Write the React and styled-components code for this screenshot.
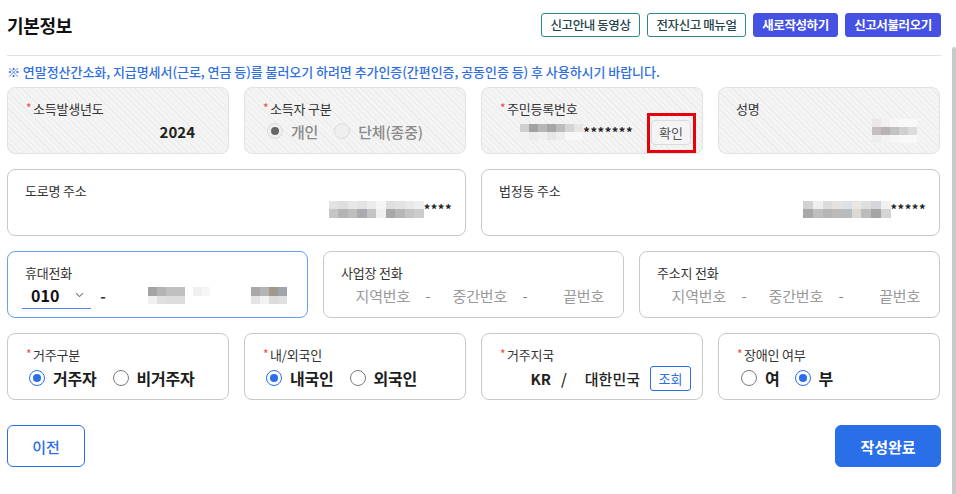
import React from "react";
import styled, { createGlobalStyle, css } from "styled-components";

const GlobalStyle = createGlobalStyle`
  html, body { margin: 0; padding: 0; background: #fff; }
  body { font-family: "Noto Sans CJK KR", "Noto Sans", sans-serif; color: #222; }
  * { box-sizing: border-box; }
`;

const Page = styled.div`
  position: relative;
  width: 956px;
  height: 494px;
  padding: 13px 0 0 7px;
  overflow: hidden;
`;

const ScrollThumb = styled.div`
  position: absolute;
  right: 0;
  top: 47px;
  bottom: 0;
  width: 4px;
  background: #c9c9c9;
  border-radius: 2px 2px 0 0;
`;

const Header = styled.div`
  display: flex;
  align-items: center;
  justify-content: space-between;
  width: 934px;
  height: 24px;
`;

const Title = styled.h1`
  margin: 0;
  font-size: 18px;
  line-height: 24px;
  font-weight: 700;
  color: #111;
  letter-spacing: -0.3px;
`;

const HeaderButtons = styled.div`
  display: flex;
  gap: 7px;
`;

const TopButton = styled.button`
  width: ${(p) => p.$w}px;
  height: 24px;
  padding: 0;
  border-radius: 3px;
  font-family: inherit;
  font-size: 12.5px;
  line-height: 20px;
  letter-spacing: -0.4px;
  ${(p) =>
    p.$filled
      ? css`
          background: #4451e3;
          border: 1px solid #4451e3;
          color: #fff;
          font-weight: 700;
        `
      : css`
          background: #fff;
          border: 1.5px solid #2b8a8f;
          color: #23444a;
          font-weight: 500;
        `}
`;

const Divider = styled.div`
  width: 934px;
  height: 1px;
  background: #e3e3e3;
  margin-top: 18px;
`;

const Notice = styled.p`
  margin: 7px 0 6px;
  font-size: 13px;
  line-height: 18px;
  font-weight: 500;
  color: #2f6fe3;
  letter-spacing: -0.05px;
`;

const Rows = styled.div`
  display: flex;
  flex-direction: column;
  gap: 15px;
  width: 933px;
`;

const Row = styled.div`
  display: grid;
  grid-template-columns: repeat(${(p) => p.$cols}, 1fr);
  gap: 15px;
`;

const Card = styled.div`
  position: relative;
  height: 67px;
  padding: 10px 11px 0 17px;
  border-radius: 8px;
  display: flex;
  flex-direction: column;
  ${(p) =>
    p.$disabled
      ? css`
          border: 1px solid #e2e2e2;
          background: repeating-linear-gradient(
            45deg,
            #f4f4f4 0px,
            #f4f4f4 3px,
            #ececec 3px,
            #ececec 4px
          );
        `
      : p.$focused
      ? css`
          border: 1px solid #6b9ef3;
          background: #fff;
        `
      : css`
          border: 1px solid #c8c8c8;
          background: #fff;
        `}
`;

const Label = styled.div`
  display: flex;
  align-items: center;
  height: 20px;
  padding-left: ${(p) => (p.$req ? "1px" : "0")};
  font-size: 13px;
  color: #333;
  letter-spacing: -0.2px;
`;

const Req = styled.span`
  color: #ef4b43;
  font-size: 12px;
  width: 7px;
  margin-top: -2px;
`;

const ValueRow = styled.div`
  display: flex;
  align-items: center;
  height: ${(p) => p.$h || 26}px;
  justify-content: ${(p) => (p.$end ? "flex-end" : "flex-start")};
  padding-right: ${(p) => p.$pr || 0}px;
  padding-left: ${(p) => p.$pl || 0}px;
`;

const Year = styled.span`
  font-size: 15px;
  font-weight: 700;
  color: #222;
`;

const RadioItem = styled.label`
  display: flex;
  align-items: center;
  gap: 8px;
  margin-right: ${(p) => p.$mr || 16}px;
  font-size: ${(p) => (p.$disabled ? 15 : 16)}px;
  font-weight: ${(p) => (p.$disabled ? 500 : 700)};
  color: ${(p) => (p.$disabled ? "#8a8a8a" : "#1d1d1d")};
  letter-spacing: -0.2px;
`;

const RadioCircle = styled.span`
  width: 16px;
  height: 16px;
  border-radius: 50%;
  display: flex;
  align-items: center;
  justify-content: center;
  flex-shrink: 0;
  ${(p) =>
    p.$disabled
      ? css`
          border: 1px solid #dcdcdc;
          background: #efefef;
        `
      : p.$checked
      ? css`
          border: 1.5px solid #2a6ee8;
          background: #fff;
        `
      : css`
          border: 1.5px solid #7a7a7a;
          background: #fff;
        `}
  &::after {
    content: "";
    display: ${(p) => (p.$checked ? "block" : "none")};
    width: 8px;
    height: 8px;
    border-radius: 50%;
    background: ${(p) => (p.$disabled ? "#666" : "#2a6ee8")};
  }
`;

const Radio = ({ checked, disabled, children, mr }) => (
  <RadioItem $disabled={disabled} $mr={mr}>
    <RadioCircle $checked={checked} $disabled={disabled} />
    {children}
  </RadioItem>
);

const MosaicGrid = styled.div`
  display: grid;
  grid-template-columns: repeat(${(p) => p.$cols}, ${(p) => p.$cw}px);
  grid-auto-rows: ${(p) => p.$ch}px;
  flex-shrink: 0;
  margin: ${(p) => p.$m || 0};
`;

const Cell = styled.span`
  display: block;
`;

const Mosaic = ({ rows, cw = 9, ch = 8, m }) => (
  <MosaicGrid $cols={rows[0].length} $cw={cw} $ch={ch} $m={m}>
    {rows.flat().map((c, i) => (
      <Cell key={i} style={{ background: c }} />
    ))}
  </MosaicGrid>
);

const Stars = styled.span`
  font-size: 13px;
  font-weight: 700;
  color: #222;
  letter-spacing: 0.5px;
  line-height: 14px;
`;

const CheckWrap = styled.div`
  position: relative;
  margin-left: 18px;
`;

const GrayButton = styled.button`
  width: 40px;
  height: 25px;
  border: 1px solid #dcdcdc;
  border-radius: 4px;
  background: #f4f4f4;
  font-family: inherit;
  font-size: 13px;
  color: #555;
  padding: 0;
`;

const Highlight = styled.div`
  position: absolute;
  left: -4px;
  top: -6px;
  width: 49px;
  height: 40px;
  border: 3px solid #e8000b;
  pointer-events: none;
`;

const Select = styled.div`
  display: flex;
  align-items: center;
  justify-content: space-between;
  width: 69px;
  height: 26px;
  margin-left: -3px;
  padding: 0 7px 0 9px;
  border-bottom: 1px solid #4f86ee;
  font-size: 16px;
  font-weight: 700;
  color: #111;
`;

const Dash = styled.span`
  width: ${(p) => p.$w || 20}px;
  text-align: center;
  font-size: 15px;
  color: ${(p) => (p.$light ? "#888" : "#333")};
  font-weight: ${(p) => (p.$light ? 400 : 700)};
  flex-shrink: 0;
`;

const Field = styled.div`
  flex: 1;
  display: flex;
  justify-content: flex-end;
  align-items: center;
  padding-right: ${(p) => p.$pr ?? 8}px;
  font-size: 15px;
  color: #9a9a9a;
  letter-spacing: -0.2px;
`;

const Country = styled.span`
  font-size: 15px;
  font-weight: ${(p) => (p.$bold ? 700 : 500)};
  color: #222;
  margin: ${(p) => p.$m || 0};
`;

const OutlineSmall = styled.button`
  width: 41px;
  height: 25px;
  border: 1px solid #2a6ee8;
  border-radius: 3px;
  background: #fff;
  color: #2a6ee8;
  font-family: inherit;
  font-size: 13px;
  padding: 0;
  margin-left: 10px;
`;

const Footer = styled.div`
  display: flex;
  justify-content: space-between;
  width: 934px;
  margin-top: 25px;
`;

const FooterButton = styled.button`
  height: 42px;
  border-radius: 6px;
  font-family: inherit;
  font-size: 15px;
  padding: 0;
  width: ${(p) => p.$w}px;
  ${(p) =>
    p.$primary
      ? css`
          background: #2a6ee8;
          border: 1px solid #2a6ee8;
          color: #fff;
          font-weight: 700;
        `
      : css`
          background: #fff;
          border: 1px solid #2a6ee8;
          color: #2a6ee8;
          font-weight: 500;
        `}
`;

const Chevron = () => (
  <svg width="9" height="6" viewBox="0 0 9 6" fill="none">
    <path d="M1 1.2L4.5 4.6L8 1.2" stroke="#777" strokeWidth="1.1" />
  </svg>
);

const L = ({ req, children }) => (
  <Label $req={req}>
    {req && <Req>*</Req>}
    {children}
  </Label>
);

const juminMosaic = [
  ["#cfcfcf", "#a2a2a2", "#b6b6b6", "#a6a6a6", "#bcbcbc", "#d4d4d4", "#e6e6e6"],
  ["#f2f2f2", "#ececec", "#efefef", "#e6e6e6", "#eeeeee", "#f8f8f8", "#f8f8f8"],
];
const nameMosaic = [
  ["#ece8e8", "#f2f0f0", "#f6f6f6", "#f8f8f8", "#f8f8f8"],
  ["#c4bfbf", "#b8b3b3", "#c2c2c2", "#cfcfcf", "#dcdcdc"],
  ["#ededed", "#f2f2f2", "#f6f6f6", "#f8f8f8", "#f8f8f8"],
];
const roadMosaic = [
  ["#e3e3e3", "#dedede", "#e7e7e7", "#e3e3e3", "#ebebeb", "#f5f5f5", "#dedede", "#e3e3e3", "#e8e8e8", "#eeeeee"],
  ["#c8c6c4", "#b4b4b4", "#c0bebc", "#a9abb1", "#c4c4c4", "#f0f0f0", "#a9a9a9", "#b8b6b4", "#c4c4c4", "#cccccc"],
];
const legalMosaic = [
  ["#d2d2d2", "#eeeeee", "#dcdcdc", "#e6e2e0", "#dde0e4", "#eae6e4", "#dde0dc", "#d6d6da", "#f0f0f0"],
  ["#a8a8a8", "#bebebe", "#b8b6b4", "#bcbab8", "#b8bcc0", "#dcd8d4", "#bcbcbc", "#a4a4a4", "#d4d4d4"],
];
const phoneA = [
  ["#a4a4a4", "#b4b4b4", "#c0c0c0", "#c0c0c0"],
  ["#f0f0f0", "#e0e0e0", "#dcdcdc", "#dcdcdc"],
];
const phoneB = [["#f0f0f0", "#f6f6f8"], ["#ffffff", "#ffffff"]];
const phoneC = [
  ["#a8a8a8", "#b4b4b4", "#a09888", "#a0a4ac"],
  ["#e4e4e4", "#f2f2f2", "#dcdcdc", "#e0e0e0"],
];

export default function App() {
  return (
    <>
      <GlobalStyle />
      <Page>
        <ScrollThumb />
        <Header>
          <Title>기본정보</Title>
          <HeaderButtons>
            <TopButton $w={99}>신고안내 동영상</TopButton>
            <TopButton $w={99}>전자신고 매뉴얼</TopButton>
            <TopButton $w={85} $filled>새로작성하기</TopButton>
            <TopButton $w={96} $filled>신고서불러오기</TopButton>
          </HeaderButtons>
        </Header>
        <Divider />
        <Notice>
          ※ 연말정산간소화, 지급명세서(근로, 연금 등)를 불러오기 하려면 추가인증(간편인증, 공동인증 등) 후 사용하시기 바랍니다.
        </Notice>
        <Rows>
          <Row $cols={4}>
            <Card $disabled>
              <L req>소득발생년도</L>
              <ValueRow $end $pr={22}>
                <Year>2024</Year>
              </ValueRow>
            </Card>
            <Card $disabled>
              <L req>소득자 구분</L>
              <ValueRow $pl={5}>
                <Radio checked disabled mr={16}>개인</Radio>
                <Radio disabled>단체(종중)</Radio>
              </ValueRow>
            </Card>
            <Card $disabled>
              <L req>주민등록번호</L>
              <ValueRow $end $h={27}>
                <Mosaic rows={juminMosaic} cw={9} ch={8} />
                <Stars>*******</Stars>
                <CheckWrap>
                  <GrayButton>확인</GrayButton>
                  <Highlight />
                </CheckWrap>
              </ValueRow>
            </Card>
            <Card $disabled>
              <L>성명</L>
              <ValueRow $end $pr={11} $h={26}>
                <Mosaic rows={nameMosaic} cw={9} ch={8} />
              </ValueRow>
            </Card>
          </Row>
          <Row $cols={2}>
            <Card>
              <L>도로명 주소</L>
              <ValueRow $end $pr={2} $h={18}>
                <Mosaic rows={roadMosaic} cw={9.5} ch={8.5} />
                <Stars>****</Stars>
              </ValueRow>
            </Card>
            <Card>
              <L>법정동 주소</L>
              <ValueRow $end $pr={2} $h={18}>
                <Mosaic rows={legalMosaic} cw={9.7} ch={8.5} />
                <Stars>*****</Stars>
              </ValueRow>
            </Card>
          </Row>
          <Row $cols={3}>
            <Card $focused>
              <L>휴대전화</L>
              <ValueRow $h={27}>
                <Select>
                  010
                  <Chevron />
                </Select>
                <Dash $w={24}>-</Dash>
                <Field $pr={1}>
                  <Mosaic rows={phoneA} cw={9.3} ch={8.5} />
                </Field>
                <Mosaic rows={phoneB} cw={8.5} ch={8.5} m="0 7px" />
                <Field $pr={9}>
                  <Mosaic rows={phoneC} cw={9} ch={8.5} />
                </Field>
              </ValueRow>
            </Card>
            <Card>
              <L>사업장 전화</L>
              <ValueRow $h={27}>
                <Field>지역번호</Field>
                <Dash $light>-</Dash>
                <Field>중간번호</Field>
                <Dash $light>-</Dash>
                <Field>끝번호</Field>
              </ValueRow>
            </Card>
            <Card>
              <L>주소지 전화</L>
              <ValueRow $h={27}>
                <Field>지역번호</Field>
                <Dash $light>-</Dash>
                <Field>중간번호</Field>
                <Dash $light>-</Dash>
                <Field>끝번호</Field>
              </ValueRow>
            </Card>
          </Row>
          <Row $cols={4}>
            <Card>
              <L req>거주구분</L>
              <ValueRow $pl={4} $h={28}>
                <Radio checked>거주자</Radio>
                <Radio>비거주자</Radio>
              </ValueRow>
            </Card>
            <Card>
              <L req>내/외국인</L>
              <ValueRow $pl={4} $h={28}>
                <Radio checked>내국인</Radio>
                <Radio>외국인</Radio>
              </ValueRow>
            </Card>
            <Card>
              <L req>거주지국</L>
              <ValueRow $end $h={28}>
                <Country $bold>KR</Country>
                <Country $m="0 18px 0 10px">/</Country>
                <Country>대한민국</Country>
                <OutlineSmall>조회</OutlineSmall>
              </ValueRow>
            </Card>
            <Card>
              <L req>장애인 여부</L>
              <ValueRow $pl={5} $h={28}>
                <Radio mr={15}>여</Radio>
                <Radio checked>부</Radio>
              </ValueRow>
            </Card>
          </Row>
        </Rows>
        <Footer>
          <FooterButton $w={78}>이전</FooterButton>
          <FooterButton $w={106} $primary>작성완료</FooterButton>
        </Footer>
      </Page>
    </>
  );
}
